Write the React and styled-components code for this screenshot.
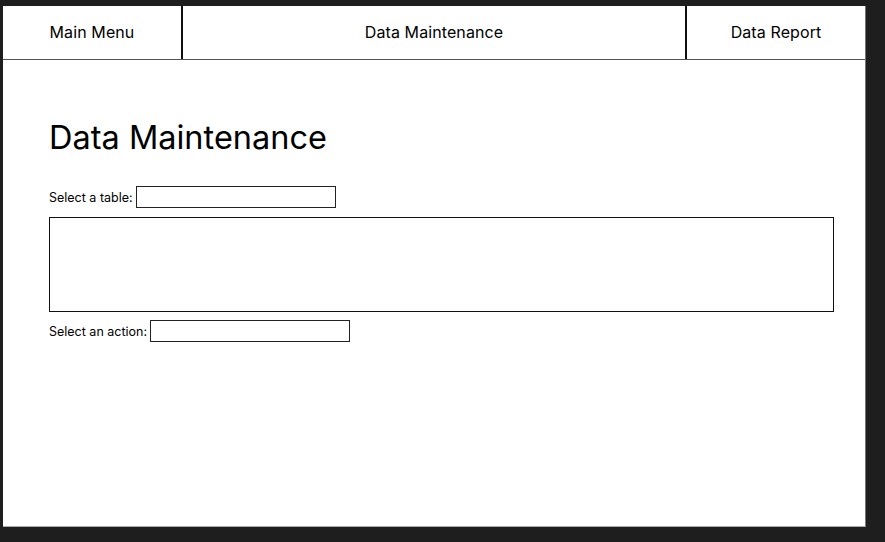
import styled, { createGlobalStyle } from 'styled-components';

const GlobalStyle = createGlobalStyle`
  html, body {
    margin: 0;
    padding: 0;
    background: #1e1e1e;
    font-family: Inter, "Noto Sans", sans-serif;
    color: #000;
  }
`;

const tabs = ['Main Menu', 'Data Maintenance', 'Data Report'];

const App = () => {
  return (
    <>
      <GlobalStyle />
      <Page>
        <Frame>
          <Header>
            {tabs.map((t, i) => (
              <Tab key={t} middle={i === 1}>{t}</Tab>
            ))}
          </Header>
          <Content>
            <Title>Data Maintenance</Title>
            <Row>
              <Label>Select a table:</Label>
              <Field />
            </Row>
            <TableArea />
            <Row>
              <Label>Select an action:</Label>
              <Field />
            </Row>
          </Content>
        </Frame>
      </Page>
    </>
  );
};

const Page = styled.div`
  padding: 6px 0 0 3px;
  height: 542px;
  box-sizing: border-box;
`;
const Frame = styled.div`
  width: 863px;
  height: 521px;
  box-sizing: border-box;
  background: #fff;
  border-right: 1px solid #777;
  border-bottom: 1px solid #aaa;
  display: flex;
  flex-direction: column;
`;
const Header = styled.div`
  display: grid;
  grid-template-columns: 178px 1fr 178px;
  height: 54px;
  box-sizing: border-box;
  border-bottom: 1px solid #555;
`;
const Tab = styled.div`
  display: flex;
  align-items: center;
  justify-content: center;
  font-size: 16px;
  letter-spacing: 0.1px;
  padding-bottom: 1px;
  border-left: ${(p) => (p.middle ? '2px solid #111' : 'none')};
  border-right: ${(p) => (p.middle ? '2px solid #111' : 'none')};
`;
const Content = styled.div`
  padding: 57px 32px 0 46px;
  display: flex;
  flex-direction: column;
`;
const Title = styled.h1`
  font-size: 32.5px;
  font-weight: 400;
  margin: 0 0 28px 0;
  line-height: 41px;
`;
const Row = styled.div`
  display: flex;
  align-items: center;
  gap: 3px;
  height: 22px;
`;
const Label = styled.span`
  font-size: 12.5px;
`;
const Field = styled.div`
  width: 200px;
  height: 22px;
  box-sizing: border-box;
  border: 1px solid #222;
`;
const TableArea = styled.div`
  width: 785px;
  height: 95px;
  box-sizing: border-box;
  border: 1px solid #111;
  margin: 9px 0 8px;
`;

export default App;
